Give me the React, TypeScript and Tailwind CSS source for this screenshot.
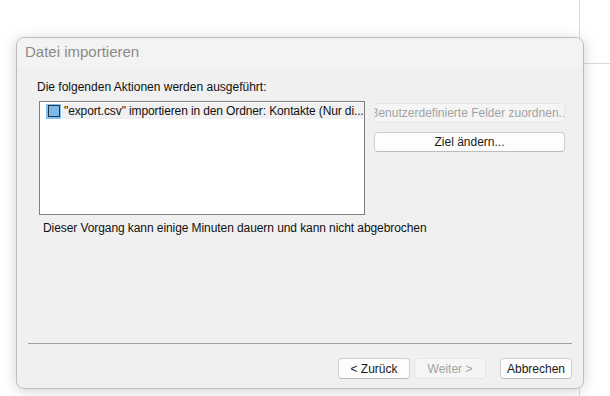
import React from "react";

function Btn({
  children,
  disabled,
  className = "",
}: {
  children: React.ReactNode;
  disabled?: boolean;
  className?: string;
}) {
  return (
    <div
      className={
        "flex items-center justify-center overflow-hidden whitespace-nowrap rounded-[4px] border text-[12px] leading-none " +
        (disabled
          ? "border-[#e6e6e6] bg-[#f5f5f5] text-[#a3a3a3] "
          : "border-[#d0d0d0] border-b-[#bcbcbc] bg-[#fdfdfd] text-[#1a1a1a] ") +
        className
      }
    >
      {children}
    </div>
  );
}

export default function App() {
  return (
    <div
      className="relative h-[396px] w-[610px] overflow-hidden bg-white"
      style={{ fontFamily: '"Liberation Sans", Arial, sans-serif' }}
    >
      {/* background window edges */}
      <div className="absolute left-[579px] top-0 h-[396px] w-px bg-[#d9d9d9]" />
      <div className="absolute left-[579px] top-[63px] h-px w-[31px] bg-[#d9d9d9]" />

      {/* dialog */}
      <div className="absolute left-[16px] top-[37px] flex h-[352px] w-[568px] flex-col overflow-hidden rounded-[8px] border border-[#bdbdbd] bg-[#f0f0f0] shadow-[0_2px_14px_rgba(0,0,0,0.18)]">
        <div className="flex h-[29px] shrink-0 items-center bg-[#f3f3f3] pl-[8px] text-[15px] text-[#8a8a8a]">
          Datei importieren
        </div>

        <div className="flex flex-1 flex-col">
          <div className="pl-[20px] pt-[13px] text-[12px] leading-[15px] text-[#111]">
            Die folgenden Aktionen werden ausgeführt:
          </div>

          <div className="mt-[6px] flex pl-[22px]">
            <div className="h-[114px] w-[326px] border border-[#7f7f7f] bg-white pt-[1px]">
              <div className="flex h-[16px] items-center pl-[6px]">
                <div className="flex h-[15px] w-[15px] shrink-0 items-center justify-center bg-[#86c0ef]">
                  <div className="h-[12px] w-[12px] border border-[#1d3650] bg-[#7db8e9]" />
                </div>
                <div className="ml-[1px] flex h-[16px] flex-1 items-center overflow-hidden whitespace-nowrap bg-[#f0f0f0] pl-[2px] text-[12px] tracking-[-0.12px] text-[#111]">
                  "export.csv" importieren in den Ordner: Kontakte (Nur di...
                </div>
              </div>
            </div>

            <div className="ml-[9px] flex flex-col gap-[9px] pt-[2px]">
              <Btn disabled className="h-[20px] w-[191px]">
                Benutzerdefinierte Felder zuordnen...
              </Btn>
              <Btn className="h-[20px] w-[191px]">Ziel ändern...</Btn>
            </div>
          </div>

          <div className="mt-[6px] pl-[26px] text-[12px] leading-[15px] tracking-[-0.08px] text-[#111]">
            Dieser Vorgang kann einige Minuten dauern und kann nicht abgebrochen
          </div>

          <div className="flex-1" />

          <div className="mx-[11px] h-px bg-[#a0a0a0]" />

          <div className="mb-[9px] mr-[11px] mt-[14px] flex justify-end">
            <Btn className="h-[21px] w-[72px]">&lt; Zurück</Btn>
            <Btn disabled className="ml-[4px] h-[21px] w-[72px]">
              Weiter &gt;
            </Btn>
            <Btn className="ml-[14px] h-[21px] w-[72px]">Abbrechen</Btn>
          </div>
        </div>
      </div>
    </div>
  );
}
